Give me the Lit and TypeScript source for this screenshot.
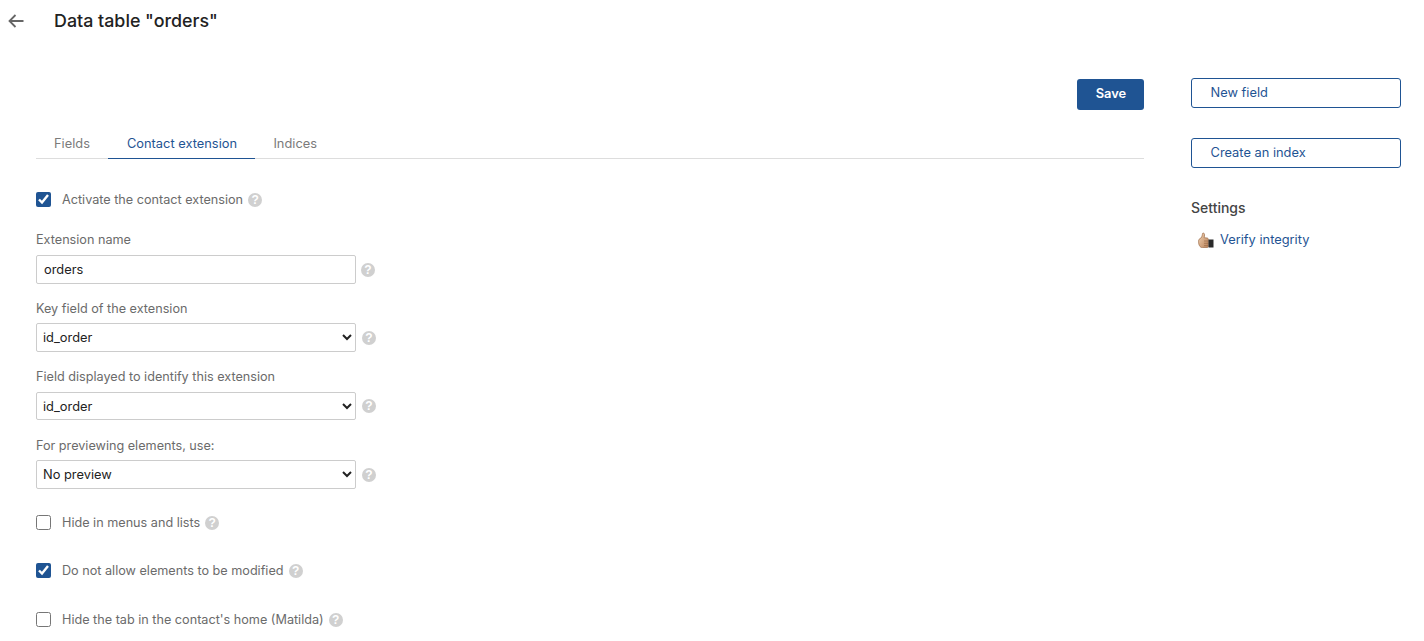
import { LitElement, html, css } from "lit";
import { customElement } from "lit/decorators.js";

const help = html`<span class="help">?</span>`;

@customElement("app-root")
export class AppRoot extends LitElement {
  static styles = css`
    :host { display: block; width: 1424px; height: 641px; overflow: hidden; background: #fff;
      font-family: Inter, "Liberation Sans", sans-serif; font-size: 12.85px; color: #6b6b6b; }
    * { box-sizing: border-box; }
    .header { display: flex; align-items: center; height: 42px; padding-left: 8px; }
    .back { width: 16px; height: 14px; display: block; margin-right: 30px; }
    h1 { margin: 0; font-size: 17.85px; font-weight: 450; color: #222; line-height: 42px; }
    .page { display: flex; padding: 36px 23px 0 36px; }
    .main { width: 1108px; }
    .actions { display: flex; justify-content: flex-end; height: 31px; margin-top: 1px; }
    .save { width: 67px; height: 31px; background: #1f5493; color: #fff; border: 0; border-radius: 3px;
      font: 600 12.88px Inter, sans-serif; padding: 0 0 3px 1px; }
    .tabs { display: flex; height: 38px; margin-top: 11px; border-bottom: 1px solid #ddd; }
    .tab { padding: 0 18px; height: 38px; line-height: 46px; color: #7b7b7b; }
    .tab.active { color: #1f5493; border-bottom: 1px solid #1f5493; padding: 0 18.4px 0 19px; }
    .side { margin-left: 47px; width: 210px; }
    .outline { display: block; width: 210px; height: 30px; border: 1px solid #1f5493; border-radius: 3px;
      color: #1f5493; padding-left: 18.5px; line-height: 28px; }
    .outline + .outline { margin-top: 30px; }
    h2 { margin: 30px 0 0; font-size: 14px; line-height: 20px; font-weight: 500; color: #444; }
    .verify { display: flex; align-items: center; margin: 12px 0 0 6px; color: #1f5493; line-height: 20px; gap: 6px; }
    .thumb { width: 17px; height: 17px; display: block; }
    .form { padding-top: 32px; font-size: 12.65px; }
    .check { display: flex; align-items: center; height: 17px; }
    .check input { width: 15px; height: 15px; margin: 0 11px 0 0; accent-color: #1f5493; flex: none; }
    .help { display: inline-block; width: 14px; height: 14px; border-radius: 50%; background: #d0d0d0; color: #fff;
      font: 700 12px/14px "Liberation Sans", sans-serif; text-align: center; margin-left: 5px; flex: none; }
    .label { display: block; line-height: 16px; }
    .label.first { margin-top: 24px; }
    .label.next { margin-top: 17px; }
    .label.last { margin-top: 18px; }
    .row { display: flex; align-items: center; height: 29px; margin-top: 6px; }
    .row.one { margin-top: 7px; }
    .row.short { height: 28px; margin-top: 7px; }
    .row select + .help { margin-left: 6px; }
    input.text, select { width: 320px; height: 100%; border: 1px solid #ccc; border-radius: 2px; background: #fff;
      color: #222; font: 12.85px Inter, sans-serif; }
    input.text { padding: 0 7px; margin: 0; }
    select { padding: 0 2px; margin: 0; }
    .gap-a { margin-top: 25px; }
    .gap-b { margin-top: 31px; }
    .gap-c { margin-top: 32px; }
  `;

  render() {
    return html`
      <div class="header">
        <svg class="back" viewBox="0 0 16 14" fill="none" stroke="#666" stroke-width="1.8">
          <path d="M15.5 7H1.500M7.500 1L1.500 7l6 6" />
        </svg>
        <h1>Data table "orders"</h1>
      </div>
      <div class="page">
        <div class="main">
          <div class="actions"><button class="save">Save</button></div>
          <div class="tabs">
            <div class="tab">Fields</div>
            <div class="tab active">Contact extension</div>
            <div class="tab">Indices</div>
          </div>
          <div class="form">
            <label class="check"><input type="checkbox" checked />Activate the contact extension ${help}</label>
            <span class="label first">Extension name</span>
            <div class="row one"><input class="text" value="orders" />${help}</div>
            <span class="label next">Key field of the extension</span>
            <div class="row"><select><option>id_order</option></select>${help}</div>
            <span class="label next">Field displayed to identify this extension</span>
            <div class="row short"><select><option>id_order</option></select>${help}</div>
            <span class="label last">For previewing elements, use:</span>
            <div class="row"><select><option>No preview</option></select>${help}</div>
            <label class="check gap-a"><input type="checkbox" />Hide in menus and lists ${help}</label>
            <label class="check gap-b"><input type="checkbox" checked />Do not allow elements to be modified ${help}</label>
            <label class="check gap-c"><input type="checkbox" />Hide the tab in the contact's home (Matilda) ${help}</label>
          </div>
        </div>
        <div class="side">
          <a class="outline">New field</a>
          <a class="outline">Create an index</a>
          <h2>Settings</h2>
          <div class="verify">
            <svg class="thumb" viewBox="0 0 17 17">
              <defs>
                <linearGradient id="skin" x1="0" y1="0" x2="1" y2="1">
                  <stop offset="0" stop-color="#f2d3b4" />
                  <stop offset="1" stop-color="#b98259" />
                </linearGradient>
              </defs>
              <path d="M1.500 9.500c0-2 1-3 2.500-3.500 1-1 1.300-3 1.500-4.500.3-.7 1.800-.6 2 .8.2 1.200-.1 2.400-.4 3.400l3.200.3c.8.200 1 .8 1 1.500v7.300l-.8.700H5.500C3 16 1.500 12.500 1.500 9.500z" fill="url(#skin)" stroke="#9c6c48" stroke-width=".7"/>
              <path d="M7 9h4.500M7 11.300h4.500M7 13.600h4" stroke="#9c6c48" stroke-width=".7" fill="none"/>
              <rect x="11.500" y="7.500" width="5" height="8" fill="#2a2a2a"/>
            </svg>
            Verify integrity
          </div>
        </div>
      </div>
    `;
  }
}
